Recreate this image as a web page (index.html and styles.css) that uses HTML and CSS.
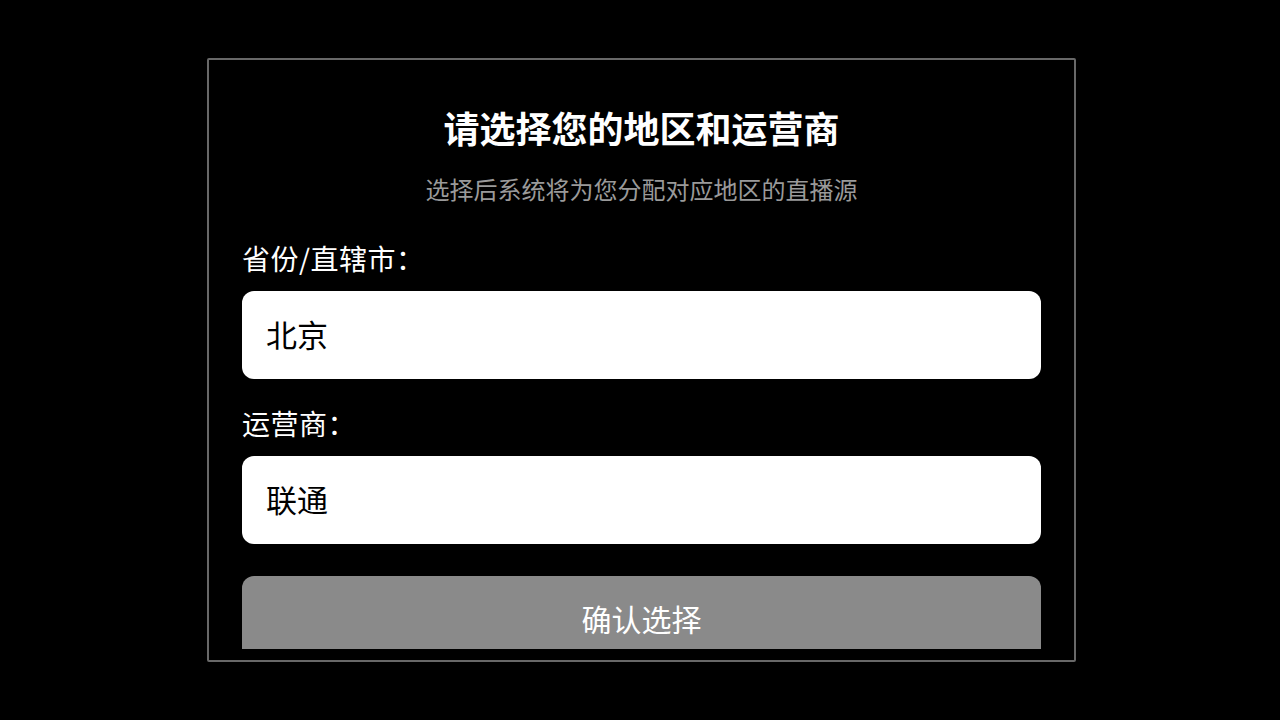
FILE: index.html
```html
<!DOCTYPE html>
<html lang="zh-CN">
<head>
<meta charset="utf-8">
<title>选择地区和运营商</title>
<link rel="stylesheet" href="styles.css">
</head>
<body>
<div class="page">
  <div class="dialog">
    <div class="dialog-body">
      <h1 class="title">请选择您的地区和运营商</h1>
      <p class="subtitle">选择后系统将为您分配对应地区的直播源</p>
      <div class="field">
        <div class="label">省份/直辖市：</div>
        <div class="select">北京</div>
      </div>
      <div class="field field-second">
        <div class="label">运营商：</div>
        <div class="select">联通</div>
      </div>
      <button class="confirm">确认选择</button>
    </div>
  </div>
</div>
</body>
</html>
```

FILE: styles.css
```css
html, body {
  margin: 0;
  padding: 0;
  background: #000;
  width: 1280px;
  height: 720px;
  overflow: hidden;
  font-family: "Noto Sans CJK SC", "Noto Sans", sans-serif;
}

.page {
  padding-top: 58px;
  padding-left: 207px;
}

.dialog {
  box-sizing: border-box;
  width: 869px;
  height: 604px;
  border: 2px solid #686868;
  border-radius: 2px;
  padding: 42px 33px 11px;
  display: flex;
  flex-direction: column;
}

.dialog-body {
  flex: 1;
  overflow: hidden;
  display: flex;
  flex-direction: column;
}

.title {
  margin: 0;
  font-size: 36px;
  line-height: 50px;
  font-weight: 700;
  color: #fff;
  text-align: center;
}

.subtitle {
  margin: 20px 0 0;
  font-size: 24px;
  line-height: 34px;
  color: #9a9a9a;
  text-align: center;
}

.field {
  margin-top: 32px;
}

.field-second {
  margin-top: 24px;
}

.label {
  font-size: 28px;
  line-height: 40px;
  color: #fff;
  margin-bottom: 13px;
  letter-spacing: 0.5px;
}

.select {
  box-sizing: border-box;
  height: 88px;
  background: #fff;
  border-radius: 12px;
  padding: 0 24px 4px;
  display: flex;
  align-items: center;
  font-size: 31px;
  color: #000;
}

.confirm {
  flex: none;
  margin-top: 32px;
  height: 88px;
  border: none;
  border-radius: 12px;
  background: #8a8a8a;
  color: #fff;
  font-family: inherit;
  font-size: 30px;
  padding: 0 0 4px;
}
```
